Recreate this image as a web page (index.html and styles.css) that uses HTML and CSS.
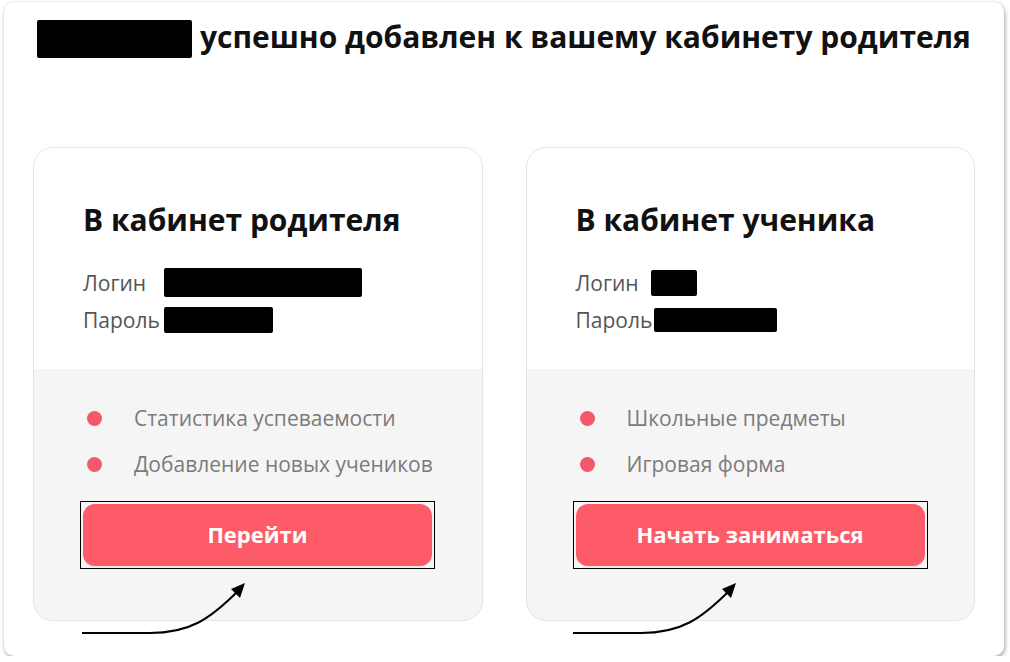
FILE: index.html
```html
<!DOCTYPE html>
<html lang="ru">
<head>
<meta charset="utf-8">
<link rel="stylesheet" href="styles.css">
</head>
<body>
<div class="panel">
  <h1 class="title"><span class="redact redact-title"></span>успешно добавлен к вашему кабинету родителя</h1>
  <div class="cards">
    <div class="card">
      <div class="card-top">
        <h2 class="card-title">В кабинет родителя</h2>
        <div class="cred"><span class="cred-label">Логин</span><span class="redact" style="width:198px;margin-left:18px;height:29px"></span></div>
        <div class="cred"><span class="cred-label">Пароль</span><span class="redact" style="width:109px;margin-left:4px;height:26px"></span></div>
      </div>
      <div class="card-bottom">
        <ul class="features">
          <li>Статистика успеваемости</li>
          <li>Добавление новых учеников</li>
        </ul>
        <div class="btn-frame"><button class="btn">Перейти</button></div>
      </div>
    </div>
    <div class="card">
      <div class="card-top">
        <h2 class="card-title">В кабинет ученика</h2>
        <div class="cred"><span class="cred-label">Логин</span><span class="redact" style="width:46px;margin-left:12px;height:26px"></span></div>
        <div class="cred"><span class="cred-label">Пароль</span><span class="redact" style="width:123px;margin-left:2px;height:24px"></span></div>
      </div>
      <div class="card-bottom">
        <ul class="features">
          <li>Школьные предметы</li>
          <li>Игровая форма</li>
        </ul>
        <div class="btn-frame"><button class="btn">Начать заниматься</button></div>
      </div>
    </div>
  </div>
  <svg class="arrow arrow-left" width="180" height="70" viewBox="0 0 180 70">
    <path d="M2 52 L70 52 C110 52 130 38 158 10" fill="none" stroke="#000" stroke-width="2"/>
    <path d="M165 2 L151 8 L160 17 Z" fill="#000"/>
  </svg>
  <svg class="arrow arrow-right" width="180" height="70" viewBox="0 0 180 70">
    <path d="M2 52 L70 52 C110 52 130 38 158 10" fill="none" stroke="#000" stroke-width="2"/>
    <path d="M165 2 L151 8 L160 17 Z" fill="#000"/>
  </svg>
</div>
</body>
</html>
```

FILE: styles.css
```css
* { box-sizing: border-box; }
html, body { margin: 0; padding: 0; background: #fff; }
body { font-family: "Open Sans", "Noto Sans", sans-serif; }

.panel {
  position: relative;
  margin: 2px 0 0 4px;
  width: 1000px;
  height: 654px;
  background: #fff;
  border-radius: 10px;
  box-shadow: 1px 2px 4px rgba(0,0,0,0.35), 0 0 2px rgba(0,0,0,0.08);
  padding: 17px 29px 0 29px;
}

.title {
  margin: 0;
  display: flex;
  align-items: center;
  font-size: 30px;
  font-weight: 700;
  color: #111;
  letter-spacing: 0;
  height: 40px;
  line-height: 40px;
  position: relative;
  top: -2px;
}
.redact {
  display: inline-block;
  background: #000;
  border-radius: 2px;
  height: 28px;
  vertical-align: middle;
}
.redact-title {
  width: 155px;
  height: 38px;
  margin-left: 4px;
  margin-right: 8px;
  position: relative;
  top: 2px;
}

.cards {
  display: flex;
  gap: 43px;
  margin-top: 88px;
}
.card {
  width: 450px;
  height: 474px;
  border: 1px solid #e4e4e4;
  border-radius: 20px;
  overflow: hidden;
  display: flex;
  flex-direction: column;
  background: #f5f5f5;
}
.card-top {
  background: #fff;
  height: 221px;
  padding: 51px 0 0 49px;
}
.card-title {
  margin: 0 0 23px;
  font-size: 30px;
  font-weight: 700;
  color: #111;
  line-height: 42px;
  letter-spacing: 0;
}
.cred {
  display: flex;
  align-items: center;
  height: 37px;
  font-size: 21px;
  color: #555;
}

.card-bottom {
  flex: 1;
  padding: 26px 0 0 46px;
}
.features {
  list-style: none;
  margin: 0;
  padding: 0;
}
.features li {
  position: relative;
  padding-left: 54px;
  height: 46px;
  line-height: 46px;
  font-size: 21px;
  color: #7b7b7b;
}
.features li::before {
  content: "";
  position: absolute;
  left: 7px;
  top: 16px;
  width: 15px;
  height: 15px;
  border-radius: 50%;
  background: #f25a6b;
}
.btn-frame {
  margin-top: 14px;
  width: 355px;
  height: 68px;
  border: 1px solid #000;
  padding: 2px;
}
.btn {
  display: block;
  width: 349px;
  height: 62px;
  border: none;
  border-radius: 12px;
  background: #fe5b69;
  color: #fff;
  font-family: "Open Sans", "Noto Sans", sans-serif;
  font-size: 22px;
  font-weight: 700;
  padding: 0 0 3px;
  box-shadow: 0 1px 2px rgba(0,0,0,0.08);
}

.arrow { position: absolute; }
.arrow-left { left: 76px; top: 579px; }
.arrow-right { left: 567px; top: 579px; }
```
